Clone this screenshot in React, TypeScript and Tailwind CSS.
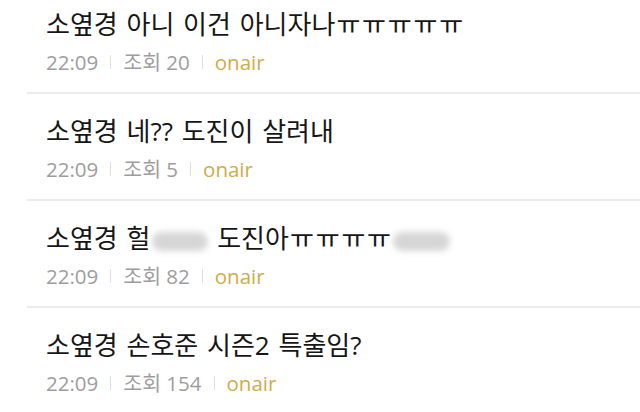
const posts = [
  { id: 1, views: 20 },
  { id: 2, views: 5 },
  { id: 3, views: 82 },
  { id: 4, views: 154 },
];

function Blur({ w }: { w: string }) {
  return <span className={`inline-block ${w} h-[19px] rounded-full bg-[#d6d6d6] blur-[3px] align-middle`}></span>;
}

function Cry({ n }: { n: number }) {
  return <span className="ml-[1px] tracking-[1.8px]">{'ㅠ'.repeat(n)}</span>;
}

function Title({ id }: { id: number }) {
  if (id === 1)
    return (
      <>
        소옆경 아니 이건 아니자나
        <Cry n={5} />
      </>
    );
  if (id === 2) return <>소옆경 네?? 도진이 살려내</>;
  if (id === 3)
    return (
      <>
        소옆경 헐<span className="ml-[2px]"><Blur w="w-[56px]" /></span> 도진아
        <Cry n={4} />
        <Blur w="w-[57px]" />
      </>
    );
  return <>소옆경 손호준 시즌2 특출임?</>;
}

export default function App() {
  return (
    <div className="w-[640px] h-[412px] overflow-hidden bg-white font-['Open_Sans','Noto_Sans_CJK_KR',sans-serif]">
      <ul className="-mt-[13px] pl-[27px]">
        {posts.map((p) => (
          <li key={p.id} className="border-b-2 border-[#ececec] pl-[19px] pt-[21px] pb-[18px]">
            {/* TITLE */}
            <div className="text-[26px] leading-[32px] text-[#161616] whitespace-nowrap [word-spacing:2px]">
              <Title id={p.id} />
            </div>
            {/* META */}
            <div className="mt-[10px] flex items-center text-[20.5px] leading-[24px] text-[#9d9d9d]">
              <span>22:09</span>
              <span className="mx-[12px] h-[14px] w-px bg-[#dedede]"></span>
              <span>조회 {p.views}</span>
              <span className="mx-[12px] h-[14px] w-px bg-[#dedede]"></span>
              <span className="text-[#cdac4a]">onair</span>
            </div>
          </li>
        ))}
      </ul>
    </div>
  );
}
